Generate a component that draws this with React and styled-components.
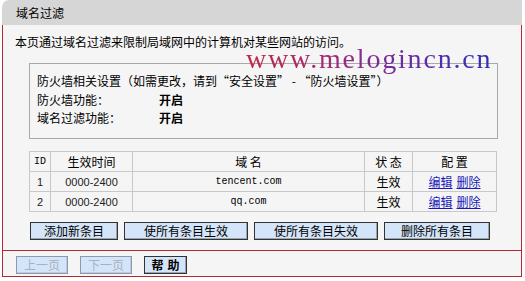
import styled, { createGlobalStyle } from "styled-components";

const GlobalStyle = createGlobalStyle`
  body {
    margin: 0;
    background: #fff;
    font-family: "Noto Sans CJK SC", "Liberation Sans", sans-serif;
    font-size: 12px;
    color: #000;
  }
`;

const Page = styled.div({
  width: "520px",
  marginLeft: "2px",
});

const TitleBar = styled.div({
  height: "25px",
  lineHeight: "25px",
  background: "#d6d6d6",
  borderTopLeftRadius: "7px",
  paddingLeft: "14px",
  fontSize: "12px",
});

const Frame = styled.div({
  border: "1px solid #b02a30",
  borderTop: "none",
  background: "#f5f5f5",
});

const Intro = styled.div({
  padding: "8px 0 0 12px",
  lineHeight: "18px",
});

const Body = styled.div({
  padding: "12px 23px 0 26px",
});

const SettingsBox = styled.div({
  position: "relative",
  border: "1px solid #a8a8a8",
  height: "76px",
  padding: "8px 0 0 7px",
  boxSizing: "border-box",
});

const Watermark = styled.div({
  position: "absolute",
  left: "216px",
  top: "-20px",
  fontFamily: '"Liberation Serif", serif',
  fontSize: "28px",
  lineHeight: "30px",
  letterSpacing: "1.8px",
  whiteSpace: "nowrap",
  background: "linear-gradient(90deg, #c02a48 0%, #a02a78 35%, #6a2aa8 65%, #2e2eb8 100%)",
  WebkitBackgroundClip: "text",
  backgroundClip: "text",
  color: "transparent",
});

const SettingRow = styled.div({
  display: "flex",
  lineHeight: "18.5px",
});

const Label = styled.span({
  width: "122px",
});

const Value = styled.span({
  fontWeight: "bold",
});

const RuleTable = styled.table({
  marginTop: "12px",
  width: "468px",
  borderCollapse: "collapse",
  border: "1px solid #b8b8b8",
});

const Cell = styled.td`
  border: 1px solid #c8c8c8;
  height: 19px;
  padding: 0;
  text-align: center;
  width: ${(p) => p.$w || "auto"};
  font-family: ${(p) =>
    p.$mono
      ? '"Liberation Mono", monospace'
      : p.$num
      ? '"Liberation Sans", sans-serif'
      : '"Noto Sans CJK SC", sans-serif'};
  font-size: ${(p) => (p.$mono ? "10px" : p.$num ? "11px" : "12px")};
  color: ${(p) => (p.$num ? "#222" : "#000")};
`;

const EntryLink = styled.a({
  color: "#1a1ab8",
  textDecoration: "underline",
  margin: "0 2px",
  cursor: "pointer",
});

const ActionRow = styled.div({
  display: "flex",
  gap: "6px",
  padding: "10px 0 10px 1px",
});

const Button = styled.button`
  height: 18px;
  width: ${(p) => p.$w};
  padding: 0;
  background: #d4e5f9;
  border: 1px solid ${(p) => (p.$off ? "#8a9ab0" : "#333")};
  box-shadow: inset -1px -1px 0 ${(p) => (p.$off ? "#c0cad8" : "#9aa4b0")};
  font-family: "Noto Sans CJK SC", sans-serif;
  font-size: 12px;
  line-height: 16px;
  color: ${(p) => (p.$off ? "#a8b0c0" : "#000")};
  font-weight: ${(p) => (p.$bold ? "bold" : "normal")};
  letter-spacing: ${(p) => (p.$bold ? "4px" : "0")};
  text-indent: ${(p) => (p.$bold ? "4px" : "0")};
`;

const Footer = styled.div({
  borderTop: "1px solid #b02a30",
  display: "flex",
  gap: "12px",
  padding: "5px 0 2px 13px",
});

const rules = [
  { id: 1, time: "0000-2400", domain: "tencent.com" },
  { id: 2, time: "0000-2400", domain: "qq.com" },
];

export default function App() {
  return (
    <Page>
      <GlobalStyle />
      <TitleBar>域名过滤</TitleBar>
      <Frame>
        <Intro>本页通过域名过滤来限制局域网中的计算机对某些网站的访问。</Intro>
        <Body>
          <SettingsBox>
            <Watermark>www.melogincn.cn</Watermark>
            <SettingRow>防火墙相关设置（如需更改，请到“安全设置” - “防火墙设置”）</SettingRow>
            <SettingRow>
              <Label>防火墙功能：</Label>
              <Value>开启</Value>
            </SettingRow>
            <SettingRow>
              <Label>域名过滤功能：</Label>
              <Value>开启</Value>
            </SettingRow>
          </SettingsBox>
          <RuleTable>
            <tbody>
              <tr>
                <Cell $w="20px" $mono>ID</Cell>
                <Cell $w="81px">生效时间</Cell>
                <Cell $w="231px">域 名</Cell>
                <Cell $w="47px">状 态</Cell>
                <Cell>配 置</Cell>
              </tr>
              {rules.map((r) => (
                <tr key={r.id}>
                  <Cell $num>{r.id}</Cell>
                  <Cell $num>{r.time}</Cell>
                  <Cell $mono>{r.domain}</Cell>
                  <Cell>生效</Cell>
                  <Cell>
                    <EntryLink>编辑</EntryLink>
                    <EntryLink>删除</EntryLink>
                  </Cell>
                </tr>
              ))}
            </tbody>
          </RuleTable>
          <ActionRow>
            <Button $w="88px">添加新条目</Button>
            <Button $w="124px">使所有条目生效</Button>
            <Button $w="124px">使所有条目失效</Button>
            <Button $w="106px">删除所有条目</Button>
          </ActionRow>
        </Body>
        <Footer>
          <Button $w="52px" $off disabled>上一页</Button>
          <Button $w="52px" $off disabled>下一页</Button>
          <Button $w="43px" $bold>帮助</Button>
        </Footer>
      </Frame>
    </Page>
  );
}
